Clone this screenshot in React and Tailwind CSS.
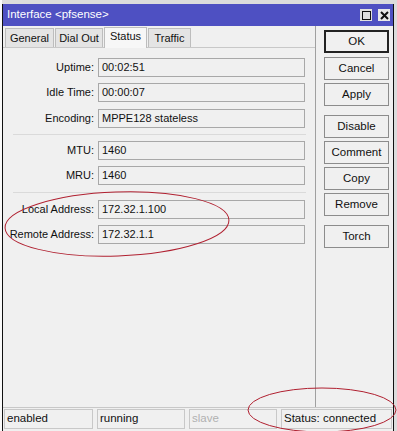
import React from "react";

const F = { fontFamily: '"Liberation Sans", Arial, sans-serif' };

function Field({ label, value }) {
  return (
    <div className="flex items-center h-[19px]">
      <div className="w-[94px] text-right pr-[4px] text-[11px] text-[#111] whitespace-nowrap">{label}</div>
      <div className="w-[207px] h-[19px] border border-[#a8a8a8] bg-[#f0f0f0] px-[3px] flex items-center text-[11px] text-[#111]">
        {value}
      </div>
    </div>
  );
}

function Btn({ children, def }) {
  return (
    <div
      className={
        "w-[65px] h-[23px] flex items-center justify-center text-[11.5px] text-[#111] bg-[#f0f0f0] " +
        (def ? "border-2 border-[#222]" : "border border-[#8c8c8c]")
      }
    >
      {children}
    </div>
  );
}

export default function App() {
  return (
    <div className="relative w-[397px] h-[431px] overflow-hidden bg-[#dcdcdc]" style={F}>
      <div className="absolute left-0 top-0 w-[2px] h-full bg-[#fafafa]" />
      <div className="ml-[2px] mt-[4px] w-[392px] h-[427px] border-l border-r border-[#111] bg-[#f0f0f0] flex flex-col">
        {/* title bar */}
        <div className="h-[22px] bg-[#4e50c2] flex items-center pl-[4px] pr-[3px]">
          <div className="flex-1 text-white text-[11.5px]">Interface &lt;pfsense&gt;</div>
          <div className="flex gap-[6px]">
            <div className="w-[12px] h-[12px] bg-[#e0e0e0] flex items-center justify-center">
              <div className="w-[9px] h-[9px] border-[1.5px] border-[#111]" />
            </div>
            <div className="w-[12px] h-[12px] bg-[#e8e8e8] flex items-center justify-center">
              <svg width="9" height="9" viewBox="0 0 9 9">
                <path d="M1 1 L8 8 M8 1 L1 8" stroke="#111" strokeWidth="2" />
              </svg>
            </div>
          </div>
        </div>
        {/* body */}
        <div className="flex flex-1">
          <div className="w-[312px] flex flex-col">
            {/* tabs */}
            <div className="h-[22px] flex items-end pl-[2px] border-b border-[#c8c8c8]">
              <div className="h-[19px] w-[49px] mr-[1px] border border-b-0 border-[#bdbdbd] bg-[#e4e4e4] flex items-center justify-center text-[11px] text-[#111]">General</div>
              <div className="h-[19px] w-[48px] mr-[1px] border border-b-0 border-[#bdbdbd] bg-[#e4e4e4] flex items-center justify-center text-[11px] text-[#111]">Dial Out</div>
              <div className="h-[21px] w-[43px] mr-[1px] border border-b-0 border-[#bdbdbd] bg-[#f7f7f7] flex items-center justify-center text-[11px] text-[#111] -mb-px pb-[3px]">Status</div>
              <div className="h-[19px] w-[43px] border border-b-0 border-[#bdbdbd] bg-[#e4e4e4] flex items-center justify-center text-[11px] text-[#111]">Traffic</div>
            </div>
            {/* panel */}
            <div className="flex-1 flex flex-col pt-[10px] pl-[1px] gap-[6px]">
              <Field label="Uptime:" value="00:02:51" />
              <Field label="Idle Time:" value="00:00:07" />
              <div className="mt-[1px]">
                <Field label="Encoding:" value="MPPE128 stateless" />
              </div>
              <div className="ml-[9px] w-[293px] h-px bg-[#dadada]" />
              <Field label="MTU:" value="1460" />
              <Field label="MRU:" value="1460" />
              <div className="ml-[9px] w-[293px] h-px bg-[#dadada] my-[1px]" />
              <Field label="Local Address:" value="172.32.1.100" />
              <Field label="Remote Address:" value="172.32.1.1" />
            </div>
          </div>
          <div className="w-px bg-[#a0a0a0]" />
          <div className="flex-1 flex flex-col pl-[8px] pt-[4px]">
            <Btn def>OK</Btn>
            <div className="h-[4px]" />
            <Btn>Cancel</Btn>
            <div className="h-[3px]" />
            <Btn>Apply</Btn>
            <div className="h-[9px]" />
            <Btn>Disable</Btn>
            <div className="h-[3px]" />
            <Btn>Comment</Btn>
            <div className="h-[3px]" />
            <Btn>Copy</Btn>
            <div className="h-[3px]" />
            <Btn>Remove</Btn>
            <div className="h-[9px]" />
            <Btn>Torch</Btn>
          </div>
        </div>
        {/* status bar */}
        <div className="h-[24px] border-t border-[#c8c8c8] flex gap-[4px] px-[1px] pt-[1px] text-[11.5px]">
          <div className="w-[89px] h-[20px] border border-[#c8c8c8] flex items-center px-[2px] text-[#111]">enabled</div>
          <div className="w-[88px] h-[20px] border border-[#c8c8c8] flex items-center px-[2px] text-[#111]">running</div>
          <div className="w-[88px] h-[20px] border border-[#c8c8c8] flex items-center px-[2px] text-[#b0b0b0]">slave</div>
          <div className="flex-1 h-[20px] border border-[#c8c8c8] flex items-center px-[2px] text-[#111]">Status: connected</div>
        </div>
      </div>
      {/* hand-drawn red ellipses */}
      <svg className="absolute left-0 top-0 pointer-events-none" width="397" height="431">
        <ellipse cx="117" cy="224" rx="112" ry="32" fill="none" stroke="#b02030" strokeWidth="1" transform="rotate(-2 117 224)" />
        <ellipse cx="322" cy="410" rx="74" ry="22" fill="none" stroke="#b02030" strokeWidth="1" />
      </svg>
    </div>
  );
}
